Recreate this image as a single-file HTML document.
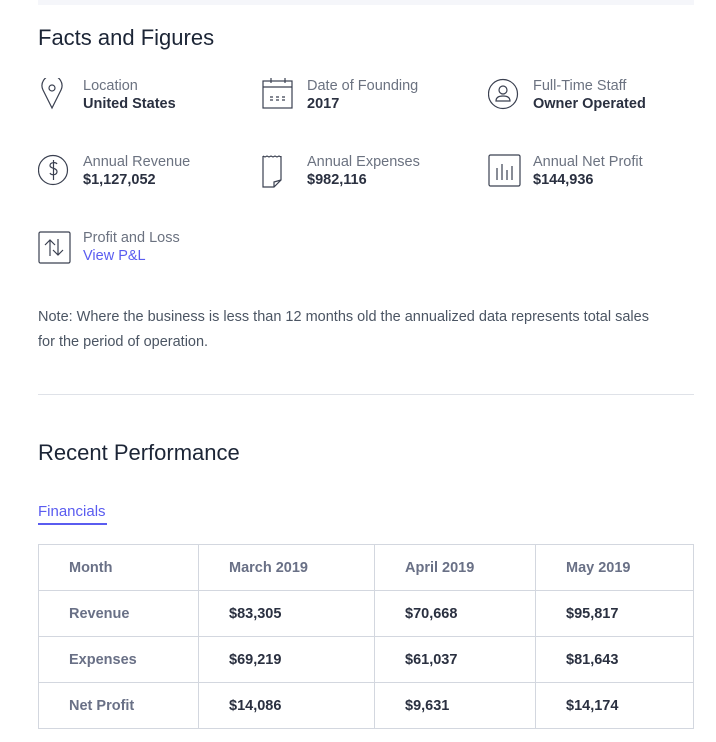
<!DOCTYPE html>
<html><head><style>
body{margin:0;background:#fff;font-family:"Liberation Sans",sans-serif;color:#1f2937;width:716px;height:742px;overflow:hidden;position:relative}
.abs{position:absolute}
.topbar{left:38px;top:0;width:656px;height:5px;background:#f5f6fa}
h2{position:absolute;margin:0;font-weight:normal;font-size:22px;color:#1c2536;left:38px}
.item{position:absolute;width:220px;height:40px}
.item svg{position:absolute;left:0;top:0}
.lbl{position:absolute;left:45px;top:0px;font-size:14.5px;color:#6b7280;white-space:nowrap}
.val{position:absolute;left:45px;top:18px;font-size:14.5px;font-weight:bold;color:#2a3040;white-space:nowrap}
.note{left:38px;top:305px;width:628px;font-size:14.5px;line-height:25px;color:#4b5563}
.hr{left:38px;top:394px;width:656px;height:1px;background:#dfe2e8}
table{position:absolute;left:38px;top:544px;width:656px;border-collapse:collapse;font-size:14.5px}
td{border:1px solid #d3d7df;height:45px;padding:0 0 0 30px;font-weight:bold;color:#2a3040}
td.h{color:#697086}
</style></head><body>
<div class="abs topbar"></div>
<h2 style="top:25px">Facts and Figures</h2>

<div class="item" style="left:38px;top:78px"><svg width="28" height="32" viewBox="0 0 28 32" fill="none" stroke="#3a4050" stroke-width="1.2"><path d="M14 30 L5 12 A10 10 0 1 1 23 12 Z"/><circle cx="14" cy="10" r="3"/></svg><div class="lbl">Location</div><div class="val">United States</div></div>
<div class="item" style="left:262px;top:78px"><svg width="34" height="32" viewBox="0 0 34 32" fill="none" stroke="#3a4050" stroke-width="1.2"><rect x="1" y="3" width="29" height="27"/><path d="M1 9H30M9 0V5M23 0V5M8 19h3M14 19h3M20 19h3M8 22h3M14 22h3M20 22h3"/></svg><div class="lbl">Date of Founding</div><div class="val">2017</div></div>
<div class="item" style="left:488px;top:78px"><svg width="32" height="32" viewBox="0 0 32 32" fill="none" stroke="#3a4050" stroke-width="1.2"><circle cx="15" cy="16" r="14.5"/><circle cx="15" cy="12" r="4"/><path d="M8 23c0-4 3-5 7-5s7 1 7 5z"/></svg><div class="lbl">Full-Time Staff</div><div class="val">Owner Operated</div></div>

<div class="item" style="left:38px;top:154px"><svg width="32" height="32" viewBox="0 0 32 32" fill="none" stroke="#3a4050" stroke-width="1.2"><circle cx="15" cy="16" r="14.5"/><path d="M19 10c-1-2-7-2-7 1.5s7 2 7 6-6 4-7 1.5M15.5 6v20"/></svg><div class="lbl">Annual Revenue</div><div class="val">$1,127,052</div></div>
<div class="item" style="left:262px;top:154px"><svg width="30" height="34" viewBox="0 0 30 34" fill="none" stroke="#3a4050" stroke-width="1.2"><path d="M1 2 L1 33 L12 33 L19 26 L19 2 M1 2 l2 1 2-1 2 1 2-1 2 1 2-1 2 1 2-1 2 1 M12 33 L12 28 L19 26"/></svg><div class="lbl">Annual Expenses</div><div class="val">$982,116</div></div>
<div class="item" style="left:488px;top:154px"><svg width="34" height="34" viewBox="0 0 34 34" fill="none" stroke="#3a4050" stroke-width="1.2"><rect x="1" y="1" width="31" height="31" rx="1.5"/><path d="M9 14V26M14 10V26M19 16V26M24 12V26"/></svg><div class="lbl">Annual Net Profit</div><div class="val">$144,936</div></div>

<div class="item" style="left:38px;top:230px"><svg width="34" height="34" viewBox="0 0 34 34" fill="none" stroke="#3a4050" stroke-width="1.2"><rect x="1" y="2" width="31" height="31" rx="1.5"/><path d="M12 26V10M7 15l5-5 5 5M20 9v16M15 20l5 5 5-5"/></svg><div class="lbl">Profit and Loss</div><div class="val" style="color:#5a5cf0;font-weight:normal">View P&amp;L</div></div>

<div class="abs note">Note: Where the business is less than 12 months old the annualized data represents total sales<br>for the period of operation.</div>
<div class="abs hr"></div>
<h2 style="top:440px">Recent Performance</h2>
<div class="abs" style="left:38px;top:503px;font-size:15px;color:#5a5cf0">Financials</div>
<div class="abs" style="left:38px;top:523px;width:69px;height:2px;background:#5a5cf0"></div>
<table>
<tr><td class="h" style="width:129px">Month</td><td class="h" style="width:145px">March 2019</td><td class="h" style="width:130px">April 2019</td><td class="h">May 2019</td></tr>
<tr><td class="h">Revenue</td><td>$83,305</td><td>$70,668</td><td>$95,817</td></tr>
<tr><td class="h">Expenses</td><td>$69,219</td><td>$61,037</td><td>$81,643</td></tr>
<tr><td class="h">Net Profit</td><td>$14,086</td><td>$9,631</td><td>$14,174</td></tr>
</table>
</body></html>
